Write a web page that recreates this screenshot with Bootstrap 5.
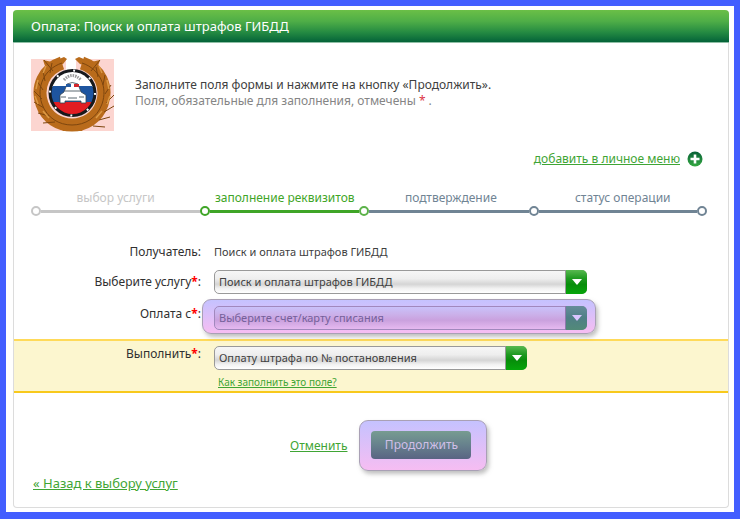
<!DOCTYPE html>
<html lang="ru">
<head>
<meta charset="utf-8">
<meta name="viewport" content="width=device-width, initial-scale=1">
<title>Оплата: Поиск и оплата штрафов ГИБДД</title>
<link href="https://cdn.jsdelivr.net/npm/bootstrap@5.3.0/dist/css/bootstrap.min.css" rel="stylesheet">
<style>
body{background:#435eff;padding:6px 6px 7px;font:12px/16px "Noto Sans","Open Sans",sans-serif;color:#404040}
.sheet{background:#fff;padding:4px 5px 4px 7px}
.pane{border:1px solid #dcdcdc;border-top:0;border-radius:4px}
.pane-head{margin:0 -1px;padding:8px 18px;background:linear-gradient(#6bbf47,#4fae47 35%,#248a42 70%,#046339);border-bottom:1px solid #8fbfa5;border-radius:4px 4px 0 0}
.pane-head h1{font-size:13px;line-height:16px;color:#fff}
.page-link-green{color:#3fa535}
.page-link-green:hover{color:#24791c}
.intro{padding:13px 17px 0;gap:21px}
.intro-text{padding-top:21px;line-height:16px}
.muted-line{color:#858585}
.req{color:#f00;font-weight:700}
.menu-line{padding:19px 25px 0;gap:7px}
.steps{display:grid;grid-template-columns:165fr 155fr 165fr 174fr;margin:22px 21px 0 17px;padding:0;list-style:none}
.step{--c:#708494;color:var(--c);text-align:center}
.step-name{display:block;line-height:17px;padding-left:10px}
.step-gray{--c:#c6c6c6}
.step-gray .step-name{padding-left:0}
.step-late .step-name{padding-left:14px}
.step-late:last-child .step-name{padding-left:10px}
.step-active{--c:#3fa527}
.track{height:3px;background:var(--c)}
.dot{width:10px;height:10px;border:2px solid var(--c);border-radius:50%;background:#fff}
.dot-mid{border-color:#5cb249}
.pay-form{padding-top:28px}
.row-line{display:flex;align-items:flex-start}
.row-label{flex:0 0 189px;text-align:right;padding-right:2px;color:#303030}
.row-value{flex:1 1 auto;padding-left:11px}
.row-value,.picker select{font-size:11px}
.row-service{padding-top:10px}
.picker{display:grid;width:100%;max-width:373px}
.picker-short{max-width:313px}
.picker select,.picker-arrow{grid-area:1/1}
.picker select{appearance:none;height:24px;width:100%;border:1px solid #999;border-radius:5px;padding:0 28px 0 4px;color:#404040;background:linear-gradient(#f6f6f6,#eee 35%,#d5d5d5 60%,#f2f2f2 80%,#fff)}
.picker-arrow{justify-self:end;width:22px;border-radius:0 5px 5px 0;border-left:1px solid #999;background:linear-gradient(#58b950,#1f9a21 35%,#078d0a 60%,#06a50a);pointer-events:none;display:flex;align-items:center;justify-content:center}
.lit{border:1px solid #a9a0b5;border-radius:9px;background:linear-gradient(#c5c2ff,#f6bdf2);box-shadow:2px 3px 4px #8888}
.lit-field{width:100%;max-width:394px;margin-left:-1px;padding:6px 8px 3px 11px}
.lit .picker select{color:#74609a;border-color:#a188bd;background:linear-gradient(#c9c1fa,#cbb0e9 35%,#caa1de 60%,#e6b9f0)}
.lit .picker-arrow{border-color:#9079ae;background:linear-gradient(#668d9a,#4f7f86 50%,#528a78)}
.row-account{padding-top:5px}
.row-account .row-label{padding-top:7px}
.band{margin-top:5px;padding:5px 0 2px;background:#fcf6cf;border-top:2px solid #ffda59;border-bottom:2px solid #f8c91c}
.small-link{display:block;width:fit-content;font-size:10px;line-height:14px;margin:5px 0 0 4px}
.act{padding-left:276px;padding-top:27px;gap:12px}
.lit-button{padding:10px 15px 11px 11px}
.go{width:100px;height:28px;padding:0;border:0;border-radius:4px;font-size:12px;color:#d0bfe8;background:linear-gradient(#779c91,#67818d 50%,#596483)}
.back{padding:4px 19px 10px;font-size:13px}
</style>
<script src="https://cdn.jsdelivr.net/npm/bootstrap@5.3.0/dist/js/bootstrap.bundle.min.js"></script>
</head>
<body class="min-vh-100 d-flex flex-column">
<main class="sheet flex-grow-1 d-flex flex-column">
<section class="pane flex-grow-1">
  <header class="pane-head"><h1 class="m-0 fw-normal">Оплата: Поиск и оплата штрафов ГИБДД</h1></header>

  <div class="intro d-flex">
    <svg width="83" height="76" viewBox="0 0 83 76" role="img" aria-label="Эмблема ГИБДД">
      <defs><clipPath id="disc"><circle cx="41.500" cy="37" r="21"/></clipPath></defs>
      <path fill="#fcd5d0" d="M0 3h83v72H0z"/>
      <path fill="#fff" d="M35 0h10v14H35z"/>
      <path d="M31 7C13 13 5 31 11 48c5 14 17 21 30 21s25-7 30-21c6-17-2-35-20-41" fill="none" stroke="#b96b1b" stroke-width="13"/>
      <path d="M12 4l9 2 12-5 3 2-4 5-17 5zM69 4l-9 2-12-5-4 2 5 5 17 5zM28 69l13-4 14 4-4 6H32z" fill="#b96b1b"/>
      <g fill="none" stroke="#7e460e" stroke-width="1">
        <path d="M31 7C13 13 5 31 11 48c5 14 17 21 30 21s25-7 30-21c6-17-2-35-20-41"/>
        <path d="M13 4l9 11M69 4l-9 11M21 7l-2 10m-7-2l2 10m-8 0l6 9m-9 1l8 8m-8 3l10 6m-6 5l11 3m-6 7l12-1m41-55l2 10m7-2l-2 10m8 0l-6 9m9 1l-8 8m8 3l-10 6m6 5l-11 3m6 7l-12-1"/>
      </g>
      <path d="M15 10l-3 7m-5 7l-2 9m-1 7l3 8m5 7l6 7m50-52l3 7m5 7l2 9m1 7l-3 8m-5 7l-6 7" stroke="#dc9a45" stroke-width="1.500"/>
      <circle cx="41.500" cy="37" r="24" fill="#17191c"/>
      <circle cx="41.500" cy="37" r="22.500" fill="none" stroke="#fff" stroke-width="2" stroke-dasharray="2 15.670"/>
      <g clip-path="url(#disc)"><path fill="#fff" d="M20 14h44v17H20z"/><path fill="#1e55a0" d="M20 30h44v16H20z"/><path fill="#e21c22" d="M20 46h44v13H20z"/></g>
      <path d="M33 24q8-9 17 0" fill="none" stroke="#999" stroke-width="3" stroke-dasharray="1.500 1"/>
      <path d="M33 36l3-8q5-3 11 0l3 8 5 3v8h-5v-2H34v2h-5v-8z" fill="#fff" stroke="#34444f" stroke-width=".8"/>
      <path d="M35 28h5v3h-5z" fill="#275ca2"/><path d="M43 28h5v3h-5z" fill="#d3272c"/>
      <path d="M34 35h15M30 41h5m13 0h5M37 42h9" stroke="#5b6971"/>
    </svg>
    <div class="intro-text">
      <div>Заполните поля формы и нажмите на кнопку «Продолжить».</div>
      <div class="muted-line">Поля, обязательные для заполнения, отмечены <span class="text-danger">*</span> .</div>
    </div>
  </div>

  <div class="menu-line d-flex justify-content-end align-items-center">
    <a class="page-link-green" href="#">добавить в личное меню</a>
    <svg width="16" height="16" viewBox="0 0 16 16" aria-hidden="true"><defs><linearGradient id="ball" x2="0" y2="1"><stop stop-color="#075f37"/><stop offset="1" stop-color="#35aa42"/></linearGradient></defs><circle cx="8" cy="8" r="7.500" fill="url(#ball)"/><path d="M8 3.500v9M3.500 8h9" stroke="#fff" stroke-width="2.600"/></svg>
  </div>

  <ol class="steps">
    <li class="step step-gray"><span class="step-name">выбор услуги</span><span class="d-flex align-items-center"><i class="dot"></i><i class="track flex-grow-1"></i></span></li>
    <li class="step step-active" aria-current="step"><span class="step-name">заполнение реквизитов</span><span class="d-flex align-items-center"><i class="dot"></i><i class="track flex-grow-1"></i></span></li>
    <li class="step step-late"><span class="step-name">подтверждение</span><span class="d-flex align-items-center"><i class="dot dot-mid"></i><i class="track flex-grow-1"></i></span></li>
    <li class="step step-late"><span class="step-name">статус операции</span><span class="d-flex align-items-center"><i class="dot"></i><i class="track flex-grow-1"></i><i class="dot"></i></span></li>
  </ol>

  <form class="pay-form">
    <div class="row-line"><span class="row-label">Получатель:</span><span class="row-value">Поиск и оплата штрафов ГИБДД</span></div>
    <div class="row-line row-service">
      <label class="row-label pt-1" for="service">Выберите услугу<span class="req">*</span>:</label>
      <div class="row-value"><div class="picker"><select id="service"><option>Поиск и оплата штрафов ГИБДД</option></select><span class="picker-arrow"><svg width="10" height="6" aria-hidden="true"><path d="M0 0h10L5 6z" fill="#fff"/></svg></span></div></div>
    </div>
    <div class="row-line row-account">
      <label class="row-label" for="account">Оплата с<span class="req">*</span>:</label>
      <div class="lit lit-field"><div class="picker"><select id="account"><option>Выберите счет/карту списания</option></select><span class="picker-arrow"><svg width="10" height="6" aria-hidden="true"><path d="M0 0h10L5 6z" fill="#d9c5ff"/></svg></span></div></div>
    </div>
    <div class="row-line band">
      <label class="row-label" for="action">Выполнить<span class="req">*</span>:</label>
      <div class="row-value"><div class="picker picker-short"><select id="action"><option>Оплату штрафа по № постановления</option></select><span class="picker-arrow"><svg width="10" height="6" aria-hidden="true"><path d="M0 0h10L5 6z" fill="#fff"/></svg></span></div>
      <a class="page-link-green small-link" href="#">Как заполнить это поле?</a></div>
    </div>
    <div class="act d-flex align-items-center">
      <a class="page-link-green" href="#">Отменить</a>
      <div class="lit lit-button"><button class="go" type="submit">Продолжить</button></div>
    </div>
  </form>
  <div class="back"><a class="page-link-green" href="#">« Назад к выбору услуг</a></div>
</section>
</main>
</body>
</html>
